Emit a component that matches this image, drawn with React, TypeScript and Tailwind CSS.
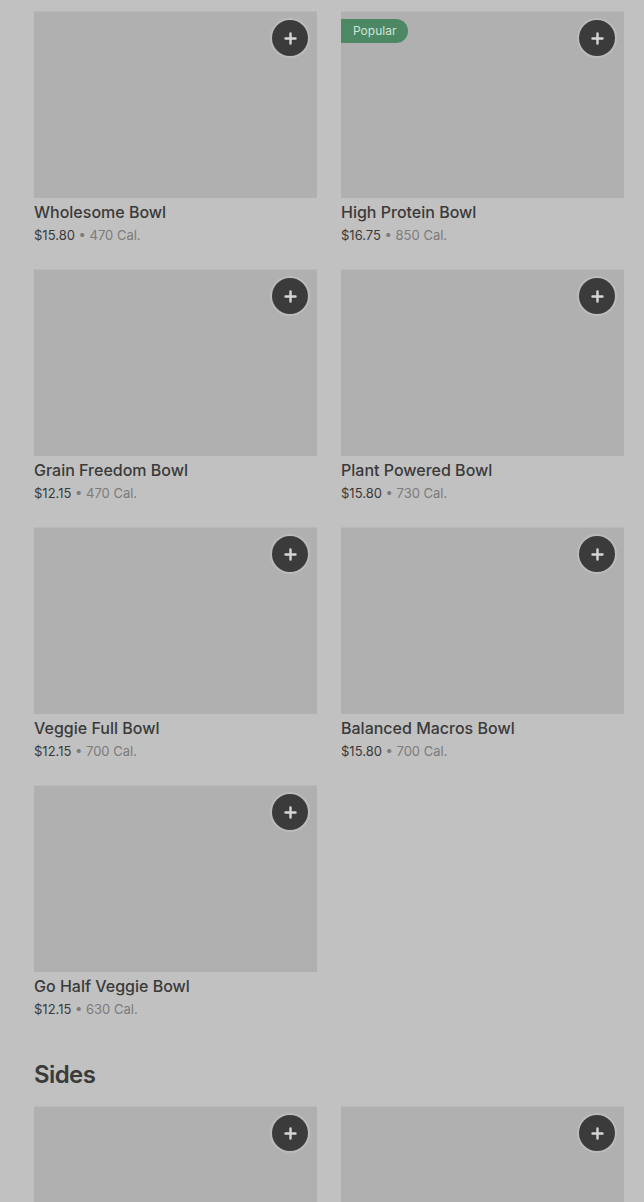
const bowls = [
  { name: 'Wholesome Bowl', price: '$15.80', cal: '470 Cal.' },
  { name: 'High Protein Bowl', price: '$16.75', cal: '850 Cal.', popular: true },
  { name: 'Grain Freedom Bowl', price: '$12.15', cal: '470 Cal.' },
  { name: 'Plant Powered Bowl', price: '$15.80', cal: '730 Cal.' },
  { name: 'Veggie Full Bowl', price: '$12.15', cal: '700 Cal.' },
  { name: 'Balanced Macros Bowl', price: '$15.80', cal: '700 Cal.' },
  { name: 'Go Half Veggie Bowl', price: '$12.15', cal: '630 Cal.' },
];

const sides = [{ name: '', price: '', cal: '' }, { name: '', price: '', cal: '' }];

type Item = { name: string; price: string; cal: string; popular?: boolean };

function AddButton() {
  return (
    <button
      type="button"
      className="absolute top-[8px] right-[9px] flex h-9 w-9 items-center justify-center rounded-full bg-[#3b3b3b] shadow-[0_0_0_2px_rgba(200,200,200,0.5)]"
    >
      <svg width="13" height="13" viewBox="0 0 13 13">
        <path d="M6.5 1.5v10M1.5 6.5h10" stroke="#d6d6d6" strokeWidth="2.4" strokeLinecap="round" />
      </svg>
    </button>
  );
}

function Card({ item }: { item: Item }) {
  return (
    <div>
      <div className="relative h-[187px] bg-[#b0b0b0] border-t border-[#b9b9b9]">
        {item.popular && (
          <span className="absolute top-[7px] left-0 flex h-6 items-center rounded-r-full bg-[#4d8865] pl-3 pr-3 text-xs text-[#cfe3d6]">
            Popular
          </span>
        )}
        <AddButton />
      </div>
      {item.name && (
        <>
          <div className="mt-[4px] text-base leading-5 font-medium text-[#3a3a3a]">{item.name}</div>
          <div className="mt-[4px] text-[13px] leading-[18px] text-[#3a3a3a]">
            {item.price} <span className="text-[#7b7b7b]">• {item.cal}</span>
          </div>
        </>
      )}
    </div>
  );
}

export default function App() {
  return (
    <div
      className="min-h-[1202px] bg-[#c1c1c1] pl-[34px] pr-[20px] pt-[11px] overflow-hidden"
      style={{ fontFamily: 'Inter, "Noto Sans", sans-serif' }}
    >
      <div className="grid grid-cols-2 gap-x-6 gap-y-[25px]">
        {bowls.map((b) => (
          <Card key={b.name} item={b} />
        ))}
      </div>
      <h2 className="mt-[43px] text-2xl leading-7 font-semibold tracking-tight text-[#3a3a3a]">Sides</h2>
      <div className="mt-[17px] grid grid-cols-2 gap-x-6 h-[200px] overflow-hidden">
        {sides.map((s, i) => (
          <Card key={i} item={s} />
        ))}
      </div>
    </div>
  );
}
